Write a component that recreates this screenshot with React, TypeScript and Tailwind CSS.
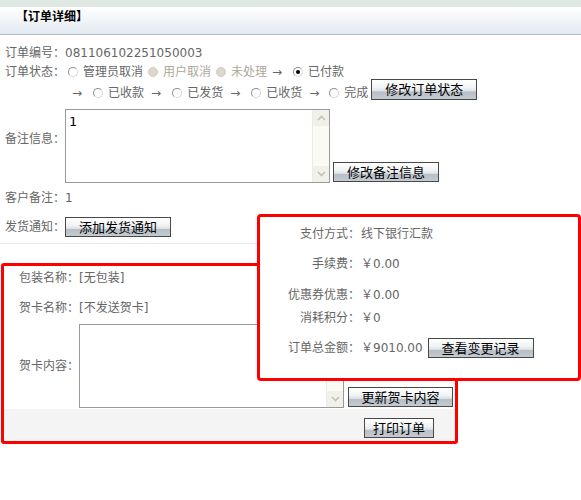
import React from "react";

type RadioState = "on" | "off" | "dis";

function Radio({ state }: { state: RadioState }) {
  if (state === "dis") {
    return (
      <span className="inline-block w-[10px] h-[10px] rounded-full border border-[#cfcbbd] bg-[#dcd8cb] shrink-0" />
    );
  }
  return (
    <span className="inline-flex items-center justify-center w-[10px] h-[10px] rounded-full border border-t-[#8f8f8f] border-l-[#8f8f8f] border-r-[#d8d8d0] border-b-[#d8d8d0] bg-white shrink-0">
      {state === "on" && <span className="block w-[4px] h-[4px] rounded-full bg-black" />}
    </span>
  );
}

function Btn({ children, className = "" }: { children: React.ReactNode; className?: string }) {
  return (
    <div
      className={`flex items-center justify-center shrink-0 border border-[#484848] text-black text-[13px] leading-none bg-[linear-gradient(to_bottom,#ffffff_0%,#f1f3f4_40%,#dfe3e6_58%,#b7bfc7_62%,#c3cad0_100%)] ${className}`}
    >
      {children}
    </div>
  );
}

function Chevron({ up }: { up?: boolean }) {
  return (
    <svg width="9" height="6" viewBox="0 0 9 6">
      <polyline
        points={up ? "1,5 4.5,1.5 8,5" : "1,1 4.5,4.5 8,1"}
        fill="none"
        stroke="#c2c2b8"
        strokeWidth="1.6"
      />
    </svg>
  );
}

function ScrollBar({ showUp = true }: { showUp?: boolean }) {
  return (
    <div className="w-[17px] h-full flex flex-col justify-between bg-[#fbfbf6] border-l border-[#ecece4] shrink-0">
      {showUp ? (
        <div className="h-[16px] flex items-center justify-center bg-[#f1f1ea]">
          <Chevron up />
        </div>
      ) : (
        <div />
      )}
      <div className="h-[16px] flex items-center justify-center bg-[#f1f1ea]">
        <Chevron />
      </div>
    </div>
  );
}

function Arrow({ className = "" }: { className?: string }) {
  return <span className={`text-[#666] shrink-0 ${className}`}>→</span>;
}

function Choice({ state, label, className = "" }: { state: RadioState; label: string; className?: string }) {
  return (
    <span className={`inline-flex items-center shrink-0 ${className}`}>
      <Radio state={state} />
      <span className={`ml-[5px] ${state === "dis" ? "text-[#aca899]" : "text-[#666]"}`}>{label}</span>
    </span>
  );
}

export default function App() {
  return (
    <div className="relative w-[581px] h-[500px] overflow-hidden bg-white text-[12px] leading-[16px] text-[#666] font-[family-name:DejaVu_Sans,Noto_Sans_CJK_SC,sans-serif]">
      {/* title bar */}
      <div className="h-[7px] bg-[#dfe8e2]" />
      <div className="h-[28px] border-b border-[#b4bcc6] bg-[linear-gradient(to_bottom,#ffffff,#e2e9f1)] pl-[16px] pt-[2px]">
        <span className="font-bold text-black">【订单详细】</span>
      </div>

      {/* order info */}
      <div className="pl-[5px] pt-[9px] pb-[5px] border-b border-[#e8e8e8]">
        <div className="h-[18px] flex items-center">
          <span className="w-[60px] shrink-0">订单编号：</span>
          <span>081106102251050003</span>
        </div>

        <div className="h-[20px] flex items-center">
          <span className="w-[60px] shrink-0">订单状态：</span>
          <Choice state="off" label="管理员取消" className="ml-[3px]" />
          <Choice state="dis" label="用户取消" className="ml-[5px]" />
          <Choice state="dis" label="未处理" className="ml-[5px]" />
          <Arrow className="ml-[5px]" />
          <Choice state="on" label="已付款" className="ml-[11px]" />
        </div>

        <div className="h-[22px] flex items-center pl-[67px]">
          <Arrow />
          <Choice state="off" label="已收款" className="ml-[11px]" />
          <Arrow className="ml-[7px]" />
          <Choice state="off" label="已发货" className="ml-[11px]" />
          <Arrow className="ml-[7px]" />
          <Choice state="off" label="已收货" className="ml-[11px]" />
          <Arrow className="ml-[7px]" />
          <Choice state="off" label="完成" className="ml-[10px]" />
          <Btn className="ml-[3px] self-start -mt-[3px] w-[106px] h-[21px]">修改订单状态</Btn>
        </div>

        <div className="mt-[5px] flex items-start">
          <span className="w-[60px] shrink-0 mt-[22px]">备注信息：</span>
          <div className="w-[265px] h-[74px] border border-[#9a9a9a] flex bg-white">
            <div className="flex-1 pl-[3px] pt-[4px] text-[13px] leading-[16px] text-black font-[family-name:DejaVu_Sans_Mono,monospace]">
              1
            </div>
            <ScrollBar />
          </div>
          <Btn className="ml-[3px] self-end mb-[1px] w-[106px] h-[20px]">修改备注信息</Btn>
        </div>

        <div className="mt-[7px] h-[16px] flex items-center">
          <span className="w-[60px] shrink-0">客户备注：</span>
          <span>1</span>
        </div>

        <div className="mt-[10px] h-[22px] flex items-center">
          <span className="w-[60px] shrink-0">发货通知：</span>
          <Btn className="w-[106px] h-[20px]">添加发货通知</Btn>
        </div>
      </div>

      {/* packaging / greeting card */}
      <div className="mt-[19px] ml-[1px] w-[457px] h-[181px] border-[3px] border-[#ff0000] rounded-[3px] flex flex-col">
        <div className="mt-[2px] h-[20px] flex items-center">
          <span className="w-[75px] text-right shrink-0">包装名称：</span>
          <span>[无包装]</span>
        </div>
        <div className="mt-[10px] h-[20px] flex items-center">
          <span className="w-[75px] text-right shrink-0">贺卡名称：</span>
          <span>[不发送贺卡]</span>
        </div>
        <div className="mt-[6px] flex items-center">
          <span className="w-[75px] text-right shrink-0">贺卡内容：</span>
          <div className="w-[265px] h-[84px] border border-[#9a9a9a] flex bg-white">
            <div className="flex-1" />
            <ScrollBar />
          </div>
          <Btn className="ml-[4px] self-end mb-[1px] w-[105px] h-[20px]">更新贺卡内容</Btn>
        </div>
        <div className="mt-[1px] flex-1 bg-[#f4f4f4] pt-[9px] pl-[360px]">
          <Btn className="w-[70px] h-[20px]">打印订单</Btn>
        </div>
      </div>

      {/* payment summary */}
      <div className="absolute left-[257px] top-[214px] w-[324px] h-[167px] border-[3px] border-[#ff0000] rounded-[4px] bg-white pt-[7px]">
        <div className="h-[20px] flex items-center">
          <span className="w-[100px] text-right shrink-0">支付方式：</span>
          <span className="ml-[1px]">线下银行汇款</span>
        </div>
        <div className="mt-[10px] h-[20px] flex items-center">
          <span className="w-[100px] text-right shrink-0">手续费：</span>
          <span className="ml-[1px]">￥0.00</span>
        </div>
        <div className="mt-[11px] h-[20px] flex items-center">
          <span className="w-[100px] text-right shrink-0">优惠券优惠：</span>
          <span className="ml-[1px]">￥0.00</span>
        </div>
        <div className="mt-[3px] h-[20px] flex items-center">
          <span className="w-[100px] text-right shrink-0">消耗积分：</span>
          <span className="ml-[1px]">￥0</span>
        </div>
        <div className="mt-[10px] h-[20px] flex items-center">
          <span className="w-[100px] text-right shrink-0">订单总金额：</span>
          <span className="ml-[1px]">￥9010.00</span>
          <Btn className="ml-[5px] w-[106px] h-[20px]">查看变更记录</Btn>
        </div>
      </div>
    </div>
  );
}
